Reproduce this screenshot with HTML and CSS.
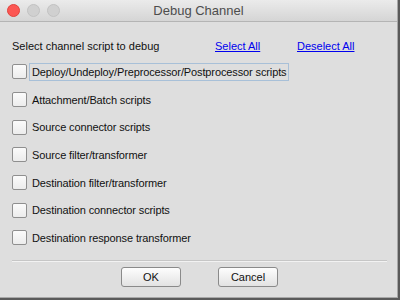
FILE: index.html
```html
<!DOCTYPE html>
<html lang="en">
<head>
    <meta charset="UTF-8">
    <title>Debug Channel</title>
    <link rel="stylesheet" href="styles.css">
</head>
<body>
    <div class="window">
        <!-- Title bar -->
        <div class="titlebar">
            <div class="lights">
                <span class="light close"></span>
                <span class="light"></span>
                <span class="light"></span>
            </div>
            <div class="title">Debug Channel</div>
        </div>

        <div class="content">
            <div class="header-row">
                <span class="prompt">Select channel script to debug</span>
                <a href="#" class="link select-all">Select All</a>
                <a href="#" class="link">Deselect All</a>
            </div>

            <div class="options">
                <label class="option"><span class="box"></span><span class="text focused">Deploy/Undeploy/Preprocessor/Postprocessor scripts</span></label>
                <label class="option"><span class="box"></span><span class="text">Attachment/Batch scripts</span></label>
                <label class="option"><span class="box"></span><span class="text">Source connector scripts</span></label>
                <label class="option"><span class="box"></span><span class="text">Source filter/transformer</span></label>
                <label class="option"><span class="box"></span><span class="text">Destination filter/transformer</span></label>
                <label class="option"><span class="box"></span><span class="text">Destination connector scripts</span></label>
                <label class="option"><span class="box"></span><span class="text">Destination response transformer</span></label>
            </div>

            <div class="separator"></div>

            <div class="buttons">
                <button class="btn">OK</button>
                <button class="btn">Cancel</button>
            </div>
        </div>
    </div>
</body>
</html>
```

FILE: styles.css
```css
body {
    margin: 0;
    padding: 0;
    width: 400px;
    height: 300px;
    background: #5a5a5a;
    font-family: "Liberation Sans", Arial, sans-serif;
    overflow: hidden;
}

.window {
    width: 398px;
    height: 298px;
    background-color: #dedede;
    border-right: 1px solid #a8a8a8;
    border-bottom: 1px solid #a8a8a8;
    box-sizing: border-box;
}

/* Title bar */
.titlebar {
    height: 22px;
    display: flex;
    align-items: center;
    background: linear-gradient(#ebebeb, #d5d5d5);
    border-bottom: 1px solid #b4b4b4;
    box-sizing: border-box;
    position: relative;
}

.lights {
    display: flex;
    gap: 7px;
    padding-left: 7px;
}

.light {
    width: 13px;
    height: 13px;
    border-radius: 50%;
    background-color: #d0d0d0;
    border: 1px solid #c2c2c2;
    box-sizing: border-box;
}

.light.close {
    background-color: #fc5753;
    border-color: #e0443e;
}

.title {
    position: absolute;
    left: 0;
    right: 0;
    text-align: center;
    font-size: 13px;
    color: #4d4d4d;
}

/* Content */
.content {
    padding: 16px 10px 0 12px;
}

.header-row {
    display: flex;
    font-size: 11px;
    color: #111;
    height: 16px;
    align-items: center;
}

.prompt {
    width: 203px;
}

.link {
    color: #0000ee;
    text-decoration: underline;
}

.select-all {
    width: 82px;
}

.options {
    display: flex;
    flex-direction: column;
    margin-top: 4px;
}

.option {
    display: flex;
    align-items: center;
    height: 27.7px;
    font-size: 11px;
    letter-spacing: -0.12px;
    color: #111;
}

.box {
    width: 15px;
    height: 15px;
    border: 1px solid #8f8f8f;
    border-radius: 2px;
    background: linear-gradient(#fbfbfb, #ececec);
    box-sizing: border-box;
    margin-right: 2px;
}

.text {
    padding: 2px 2px;
    border: 1px solid transparent;
}

.text.focused {
    border-color: #a8c0d8;
}

.separator {
    margin-top: 8px;
    height: 1px;
    background-color: #c6c6c6;
    border-bottom: 1px solid #f2f2f2;
}

.buttons {
    display: flex;
    justify-content: center;
    gap: 37px;
    margin-top: 5px;
}

.btn {
    width: 60px;
    height: 20px;
    font-family: "Liberation Sans", Arial, sans-serif;
    font-size: 11px;
    color: #111;
    background: linear-gradient(#fdfdfd, #e2e2e2);
    border: 1px solid #8a8a8a;
    border-radius: 3px;
    padding: 0;
}
```
